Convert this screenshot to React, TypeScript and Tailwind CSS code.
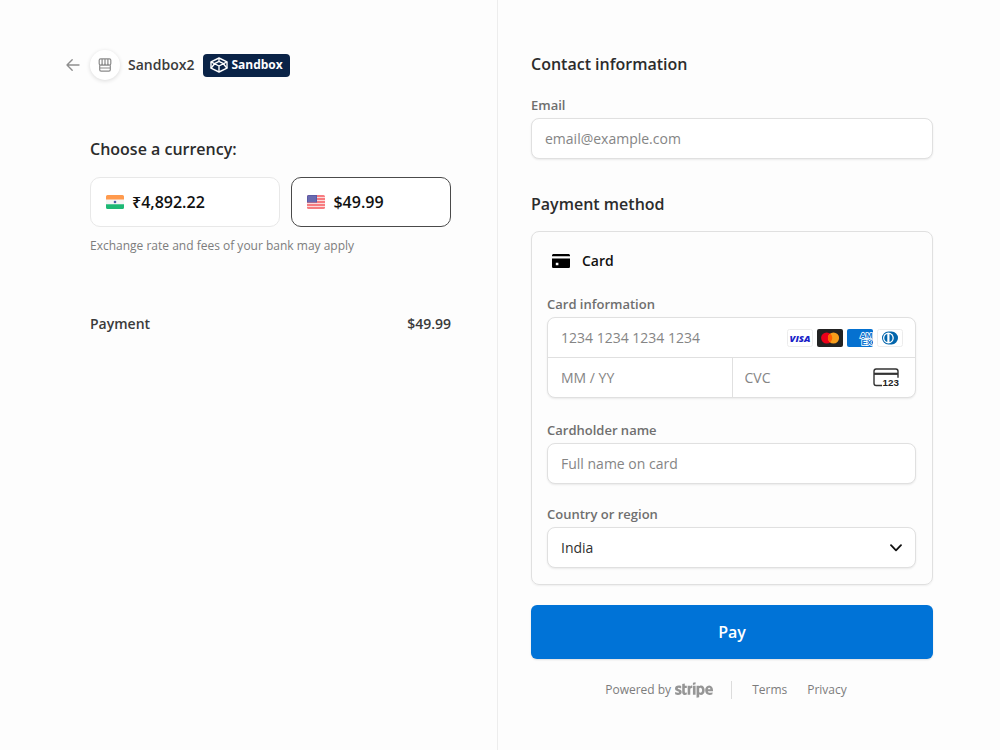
import { useState } from "react";
import type { ReactNode } from "react";
import { FaStripe } from "react-icons/fa";

function BackArrow() {
  return (
    <svg viewBox="0 0 14 14" className="h-[14px] w-[14px]" fill="none" stroke="#8e8e8e" strokeWidth="1.4" strokeLinecap="round" strokeLinejoin="round">
      <path d="M13 7H1M6.2 1.8 1 7l5.2 5.2" />
    </svg>
  );
}

function StoreIcon() {
  return (
    <svg viewBox="0 0 14 14" className="h-[14px] w-[14px]" fill="none" stroke="#8a8a8a" strokeWidth="1.2" strokeLinejoin="round">
      <path d="M2.6.8h8.8c.8 0 1.4.6 1.4 1.4v3.4c0 .9-.7 1.6-1.5 1.6S9.9 6.5 9.9 5.6c0 .9-.6 1.6-1.4 1.6S7 6.5 7 5.6c0 .9-.7 1.6-1.5 1.6S4.1 6.5 4.1 5.6c0 .9-.6 1.6-1.4 1.6S1.2 6.5 1.2 5.6V2.2C1.2 1.4 1.8.8 2.6.8z" />
      <path d="M1.7 7.2v4.6c0 .9.5 1.4 1.4 1.4h7.8c.9 0 1.4-.5 1.4-1.4V7.2M4.1 5.6V1M7 5.6V1M9.9 5.6V1M1.7 10h10.6" />
    </svg>
  );
}

function CubeIcon() {
  return (
    <svg viewBox="0 0 18 16" className="h-4 w-[18px]" fill="none" stroke="#fff" strokeWidth="1.4" strokeLinejoin="round">
      <path d="M9 1 17 4.8v6.4L9 15l-8-3.8V4.8z" />
      <path d="M1 4.8 9 9l8-4.2M9 9v6M1 11.2 4.6 6.7M17 11.2l-3.6-4.5M4.6 6.7 9 4.4l4.4 2.3M9 1v3.4" />
    </svg>
  );
}

function IndiaFlag() {
  return (
    <svg viewBox="0 0 18 14" className="h-[14px] w-[18px]">
      <path d="M1.5 0h15A1.5 1.5 0 0 1 18 1.5V4.7H0V1.5A1.5 1.5 0 0 1 1.5 0z" fill="#ff9a4d" />
      <path d="M0 4.7h18v4.6H0z" fill="#f4f4f4" />
      <path d="M0 9.3h18v3.2a1.5 1.5 0 0 1-1.5 1.5h-15A1.5 1.5 0 0 1 0 12.5z" fill="#1db874" />
      <circle cx="9" cy="7" r="1.3" fill="#4a5fa8" />
    </svg>
  );
}

function UsFlag() {
  return (
    <svg viewBox="0 0 18 14" className="h-[14px] w-[18px]">
      <rect width="18" height="14" rx="1.5" fill="#f77c80" />
      <path d="M0 2.5h18M0 5.5h18M0 8.5h18M0 11.5h18" stroke="#fbdadb" strokeWidth="1.1" />
      <path d="M1.5 0H10v7.5H0v-6A1.5 1.5 0 0 1 1.5 0z" fill="#5b5ba6" />
      <path d="M1.5 2h7.5M1.5 4h7.5M1.5 6h7.5" stroke="#a9a9d6" strokeWidth=".8" strokeDasharray="1 1" />
    </svg>
  );
}

function CardIcon() {
  return (
    <svg viewBox="0 0 18 14" className="h-[14px] w-[18px]" fill="#000">
      <path d="M1.6 0h14.8c.9 0 1.6.7 1.6 1.5v.8H0v-.8C0 .7.7 0 1.6 0z" />
      <path fillRule="evenodd" d="M0 4.6h18v7.8c0 .9-.7 1.6-1.6 1.6H1.6C.7 14 0 13.3 0 12.4zM3.8 8.8v2.4h2.6V8.8z" />
    </svg>
  );
}

function Visa() {
  return (
    <svg viewBox="0 0 26 18" className="h-[18px] w-[26px]" aria-label="Visa">
      <rect x=".5" y=".5" width="25" height="17" rx="2" fill="#fff" stroke="#ececec" />
      <text x="13" y="12.6" textAnchor="middle" fontFamily="Open Sans, sans-serif" fontStyle="italic" fontWeight="800" fontSize="9.5" fill="#1a1fc8">VISA</text>
    </svg>
  );
}

function Mastercard() {
  return (
    <svg viewBox="0 0 26 18" className="h-[18px] w-[26px]" aria-label="Mastercard">
      <rect width="26" height="18" rx="2" fill="#222" />
      <circle cx="9.7" cy="9" r="5.6" fill="#eb001b" />
      <circle cx="16.5" cy="9" r="5.6" fill="#f79e1b" />
      <path d="M13.1 4.55a5.6 5.6 0 0 1 0 8.9 5.6 5.6 0 0 1 0-8.9z" fill="#ff5f00" />
    </svg>
  );
}

function Amex() {
  return (
    <svg viewBox="0 0 26 18" className="h-[18px] w-[26px]" aria-label="American Express">
      <rect width="26" height="18" rx="2" fill="#0571d0" />
      <g fontFamily="Liberation Sans, sans-serif" fontWeight="700" fontSize="8" fill="#0571d0" stroke="#fff" strokeWidth="1.6" paintOrder="stroke">
        <text x="13" y="8.5">AM</text>
        <text x="14.5" y="15.5">EX</text>
      </g>
    </svg>
  );
}

function Diners() {
  return (
    <svg viewBox="0 0 26 18" className="h-[18px] w-[26px]" aria-label="Diners Club">
      <rect x=".5" y=".5" width="25" height="17" rx="2" fill="#fff" stroke="#ececec" />
      <path d="M11.4 2.6h3.2a6.4 6.4 0 0 1 0 12.8h-3.2a6.4 6.4 0 0 1 0-12.8z" fill="#0165ac" />
      <circle cx="11.4" cy="9" r="5.4" fill="#fff" />
      <path d="M10.3 4.9v8.2a4.3 4.3 0 0 1 0-8.2zM12.5 4.9a4.3 4.3 0 0 1 0 8.2z" fill="#0165ac" />
    </svg>
  );
}

function CvcIcon() {
  return (
    <svg viewBox="0 0 28 20" className="h-5 w-7 shrink-0" fill="none" stroke="#333" strokeWidth="1.4">
      <path d="M9 17.5H3.2A2.3 2.3 0 0 1 1 15.2V3.3A2.3 2.3 0 0 1 3.2 1h19.6A2.3 2.3 0 0 1 25 3.3v6.4" />
      <path d="M1 5.8h24" strokeWidth="2.2" />
      <text x="9.6" y="18" fontFamily="Liberation Sans, sans-serif" fontWeight="700" fontSize="9.8" fill="#222" stroke="none">123</text>
    </svg>
  );
}

const currencies = [
  { id: "inr", label: "₹4,892.22", flag: <IndiaFlag /> },
  { id: "usd", label: "$49.99", flag: <UsFlag /> },
];

const labelClass = "block text-[13px] leading-5 font-semibold text-[#6f6f6f]";
const inputClass =
  "block h-[41px] w-full rounded-lg border border-[#e0e0e0] bg-white px-[13px] text-sm text-[#303030] shadow-[0_1px_2px_rgba(0,0,0,0.08)] placeholder:text-[#858585] outline-none";
const cellClass = "h-[39px] w-full min-w-0 bg-transparent text-sm text-[#303030] placeholder:text-[#858585] outline-none";

function Field({ id, label, children }: { id: string; label: string; children: ReactNode }) {
  return (
    <div>
      <label htmlFor={id} className={labelClass}>{label}</label>
      <div className="mt-[3px]">{children}</div>
    </div>
  );
}

function Summary() {
  const [currency, setCurrency] = useState("usd");
  return (
    <section className="border-r border-[#ededed] pt-[50px] pr-[46px] pl-[90px]">
      <header className="-ml-6 flex h-[30px] items-center">
        <a href="#back" aria-label="Back"><BackArrow /></a>
        <span className="ml-[10px] flex h-[30px] w-[30px] items-center justify-center rounded-full bg-white shadow-[0_1px_4px_rgba(0,0,0,0.14)]">
          <StoreIcon />
        </span>
        <span className="ml-2 text-sm leading-6 font-semibold text-[#3a3a3a]">Sandbox2</span>
        <span className="ml-[9px] flex h-[23px] items-center gap-[3px] rounded bg-[#0a2347] px-[7px] text-xs font-bold text-white">
          <CubeIcon />
          Sandbox
        </span>
      </header>
      <h2 className="mt-[57px] text-base leading-6 font-semibold text-[#2c2c2c]">Choose a currency:</h2>
      <div className="mt-4 grid grid-cols-[191fr_160fr] gap-[11px]">
        {currencies.map((c) => (
          <button
            key={c.id}
            type="button"
            aria-pressed={currency === c.id}
            onClick={() => setCurrency(c.id)}
            className={`flex h-[50px] items-center gap-2 rounded-[10px] border bg-white px-[15px] text-base font-semibold text-[#111] ${currency === c.id ? "border-[#4a4a4a]" : "border-[#e8e8e8]"}`}
          >
            {c.flag}
            {c.label}
          </button>
        ))}
      </div>
      <p className="mt-[9px] text-xs leading-5 text-[#7c7c7c]">Exchange rate and fees of your bank may apply</p>
      <div className="mt-14 flex justify-between text-sm leading-6 font-semibold text-[#3a3a3a]">
        <span>Payment</span>
        <span>$49.99</span>
      </div>
    </section>
  );
}

function Checkout() {
  return (
    <form className="pt-[52px] pr-[67px] pb-[51px] pl-[33px]" onSubmit={(e) => e.preventDefault()}>
      <h2 className="mb-[19px] text-base leading-6 font-semibold text-[#2c2c2c]">Contact information</h2>
      <Field id="email" label="Email">
        <input id="email" type="email" placeholder="email@example.com" className={inputClass} />
      </Field>

      <h2 className="mt-[33px] text-base leading-6 font-semibold text-[#2c2c2c]">Payment method</h2>
      <div className="mt-[15px] rounded-lg border border-[#e0e0e0] pt-[17px] pr-4 pb-4 pl-[15px] shadow-[0_1px_2px_rgba(0,0,0,0.06)]">
        <div className="flex items-center gap-3 pl-[5px] text-sm leading-6 font-semibold text-[#111]">
          <CardIcon />
          Card
        </div>
        <fieldset className="mt-[21px]">
          <legend className={labelClass}>Card information</legend>
          <div className="mt-[3px] rounded-lg border border-[#e0e0e0] bg-white shadow-[0_1px_2px_rgba(0,0,0,0.08)]">
            <div className="flex items-center border-b border-[#e0e0e0] pr-3 pl-[13px]">
              <input aria-label="Card number" placeholder="1234 1234 1234 1234" className={cellClass} />
              <div className="flex gap-1">
                <Visa />
                <Mastercard />
                <Amex />
                <Diners />
              </div>
            </div>
            <div className="grid grid-cols-2">
              <div className="pl-[13px]">
                <input aria-label="Expiry date" placeholder="MM / YY" className={cellClass} />
              </div>
              <div className="flex items-center border-l border-[#e0e0e0] pr-[14px] pl-3">
                <input aria-label="Security code" placeholder="CVC" className={cellClass} />
                <CvcIcon />
              </div>
            </div>
          </div>
        </fieldset>
        <div className="mt-[22px] flex flex-col gap-5">
          <Field id="name" label="Cardholder name">
            <input id="name" placeholder="Full name on card" className={inputClass} />
          </Field>
          <Field id="country" label="Country or region">
            <div className="relative">
              <select id="country" defaultValue="India" className={`${inputClass} appearance-none`}>
                <option>India</option>
                <option>United States</option>
              </select>
              <svg viewBox="0 0 12 8" className="pointer-events-none absolute inset-y-0 right-[14px] my-auto h-2 w-3" fill="none" stroke="#111" strokeWidth="1.8" strokeLinecap="round" strokeLinejoin="round">
                <path d="M1 1.2 6 6.4l5-5.2" />
              </svg>
            </div>
          </Field>
        </div>
      </div>

      <button type="submit" className="mt-5 h-[54px] w-full rounded-md bg-[#0073d7] text-base font-semibold text-white shadow-[0_1px_2px_rgba(0,0,0,0.12)]">
        Pay
      </button>
      <footer className="mt-[21px] flex items-center justify-center pr-3 text-xs leading-5 text-[#7c7c7c]">
        <span>Powered by</span>
        <FaStripe role="img" aria-label="Stripe" className="-my-2 ml-1 h-8 w-[38px] text-[#969696]" />
        <span className="ml-[18px] h-[18px] w-px bg-[#dcdcdc]" />
        <a href="#terms" className="ml-5">Terms</a>
        <a href="#privacy" className="ml-5">Privacy</a>
      </footer>
    </form>
  );
}

export default function App() {
  return (
    <main className="grid min-h-screen grid-cols-[498fr_502fr] bg-[#fdfdfd] font-['Open_Sans','Noto_Sans',sans-serif]">
      <Summary />
      <Checkout />
    </main>
  );
}
